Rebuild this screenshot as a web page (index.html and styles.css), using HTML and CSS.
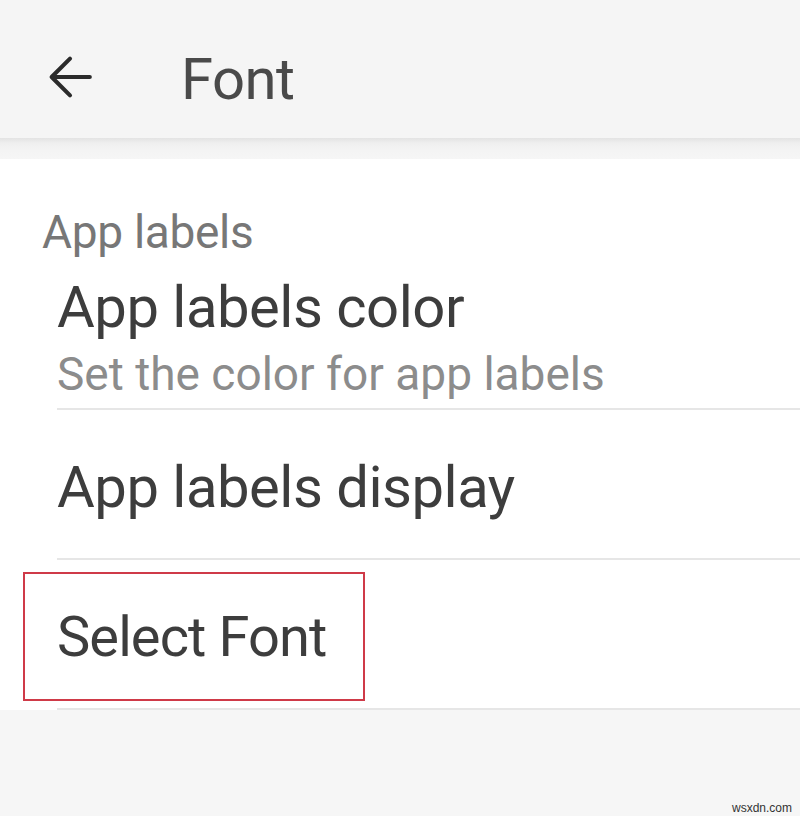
FILE: index.html
```html
<!DOCTYPE html>
<html lang="en">
<head>
<meta charset="utf-8">
<title>Font</title>
<link rel="stylesheet" href="styles.css">
</head>
<body>
<header class="appbar">
  <svg class="back" viewBox="0 0 24 24" width="58" height="58" aria-hidden="true">
    <path d="M20.2 12H4.8 M12 4.4L4.4 12L12 19.6" fill="none" stroke="#2b2b2b" stroke-width="1.7" stroke-linecap="round" stroke-linejoin="round"/>
  </svg>
  <h1 class="title">Font</h1>
</header>
<div class="appbar-shadow"></div>
<main class="prefs">
  <div class="category">App labels</div>
  <div class="item item-first">
    <div class="item-title">App labels color</div>
    <div class="item-summary">Set the color for app labels</div>
  </div>
  <div class="item">
    <div class="item-title">App labels display</div>
  </div>
  <div class="item item-highlight">
    <div class="item-title item-title-select">Select Font</div>
    <div class="highlight-box"></div>
  </div>
</main>
<div class="watermark">wsxdn.com</div>
</body>
</html>
```
FILE: styles.css
```css
html, body {
  margin: 0;
  padding: 0;
}
body {
  width: 800px;
  height: 816px;
  background: #f6f6f6;
  font-family: Roboto, "Noto Sans", "Liberation Sans", sans-serif;
  position: relative;
  overflow: hidden;
}
.appbar {
  height: 138px;
  background: #f5f5f5;
  display: flex;
  align-items: flex-start;
  padding-left: 41px;
  box-sizing: border-box;
}
.back {
  margin-top: 48px;
  flex: none;
}
.title {
  margin: 44px 0 0 82px;
  font-size: 58px;
  line-height: 70px;
  font-weight: 400;
  color: #4a4a4a;
  letter-spacing: -0.5px;
}
.appbar-shadow {
  height: 21px;
  background: linear-gradient(#e3e3e3, #efefef 25%, #f4f4f4 60%, #f6f6f6);
}
.prefs {
  background: #ffffff;
  padding-top: 45px;
}
.category {
  margin-left: 42px;
  font-size: 46px;
  line-height: 56px;
  color: #777777;
  letter-spacing: -0.3px;
}
.item {
  margin-left: 57px;
  border-bottom: 2px solid #e6e6e6;
  padding: 42px 0 36px;
  position: relative;
}
.item-first {
  padding: 12px 0 6px;
}
.item-title {
  font-size: 58px;
  line-height: 70px;
  color: #3d3d3d;
  letter-spacing: -0.5px;
}
.item-title-select {
  font-size: 56px;
  letter-spacing: -0.9px;
}
.item-summary {
  margin-top: 4px;
  font-size: 46px;
  line-height: 56px;
  color: #8c8c8c;
}
.highlight-box {
  position: absolute;
  left: -34px;
  top: 12px;
  width: 342px;
  height: 129px;
  box-sizing: border-box;
  border: 2px solid #cf3a48;
}
.watermark {
  position: absolute;
  right: 8px;
  bottom: 1px;
  font-family: "Liberation Sans", Arial, sans-serif;
  font-size: 12px;
  color: #333333;
}
```
